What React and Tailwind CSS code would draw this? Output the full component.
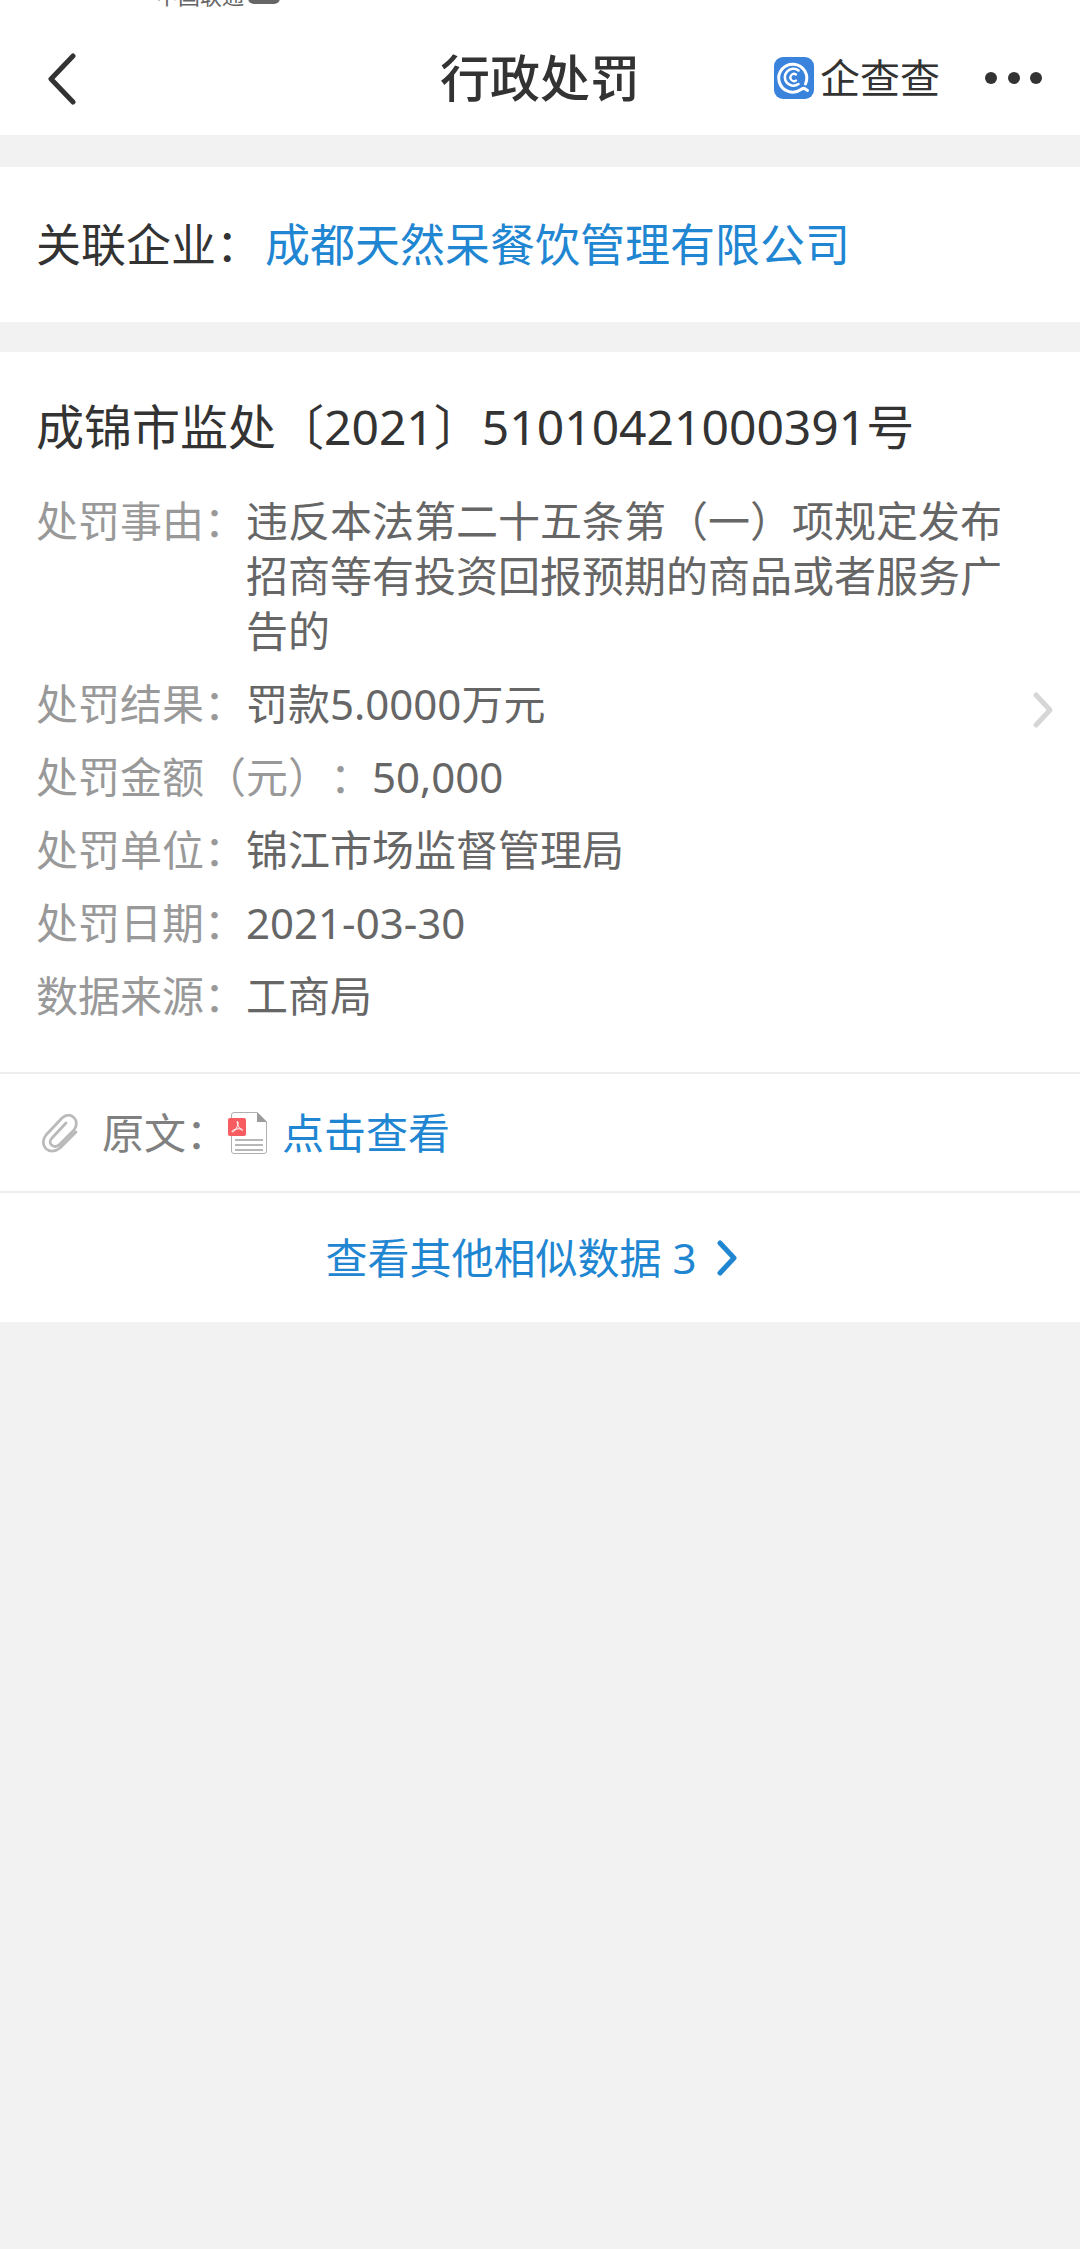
import React from 'react';

const records = [
  { label: '处罚事由：', value: '违反本法第二十五条第（一）项规定发布招商等有投资回报预期的商品或者服务广告的' },
  { label: '处罚结果：', value: '罚款5.0000万元' },
  { label: '处罚金额（元）：', value: '50,000' },
  { label: '处罚单位：', value: '锦江市场监督管理局' },
  { label: '处罚日期：', value: '2021-03-30' },
  { label: '数据来源：', value: '工商局' },
];

const ChevronLeft = () => (
  <svg width="32" height="54" viewBox="0 0 32 54" fill="none" stroke="#333333" strokeWidth="5" strokeLinecap="round" strokeLinejoin="round">
    <path d="M27 5 L5 28 L27 51" />
  </svg>
);

const ChevronRight = ({ color }) => (
  <svg width="22" height="38" viewBox="0 0 22 38" fill="none" stroke={color} strokeWidth="5" strokeLinecap="round" strokeLinejoin="round">
    <path d="M4 4 L18 19 L4 34" />
  </svg>
);

const BrandLogo = () => (
  <svg width="40" height="42" viewBox="0 0 40 42" fill="none" stroke="#ffffff" strokeLinecap="round">
    <rect width="40" height="42" rx="9" fill="#3a83dc" stroke="none" />
    <path d="M31.500 27 A14 14 0 1 0 27 32.500 C29 30.500 31 31 33.500 33.500" strokeWidth="3" />
    <path d="M24.500 13.500 A8.500 8.500 0 1 0 24.500 27" strokeWidth="2.6" />
    <path d="M22 17.500 A3.600 3.600 0 1 0 22 23.500" strokeWidth="2.2" />
  </svg>
);

const Paperclip = () => (
  <svg width="40" height="42" viewBox="0 0 40 42" fill="none" stroke="#bababa" strokeWidth="2.8" strokeLinecap="round" strokeLinejoin="round">
    <path d="M36 20 L20 36 C9 45 -2 33 6 23 L22 6 C31 -2 41 9 34 18 L19 33 C13 37 7 31 12 26 L26 11" />
  </svg>
);

const PdfFile = () => (
  <svg width="40" height="44" viewBox="0 0 40 44" fill="none">
    <path d="M6 1.5 H29 L38.5 11 V40 a2.5 2.5 0 0 1 -2.5 2.5 H6 a2.5 2.5 0 0 1 -2.5 -2.5 V4 A2.5 2.5 0 0 1 6 1.5 Z" fill="#ffffff" stroke="#b0b0b0" />
    <path d="M29 1 L39 11 H29 Z" fill="#9a9a9a" />
    <path d="M7 29 H35 M7 34 H35 M7 39 H35" stroke="#a0a0a0" strokeWidth="1.6" />
    <rect y="7" width="18" height="18" rx="2" fill="#f75c60" />
    <path d="M9 10.5 C11.5 10.5 9.5 15 8.5 17 C7 20 4.5 22 4 20.5 C3.5 18.5 14 16.5 14.5 18.8 C14.5 21 9.5 16 9 10.5 Z" stroke="#ffffff" strokeWidth="1" />
  </svg>
);

const App = () => {
  return (
    <div className="min-h-screen bg-[#f2f2f2] font-['Noto_Sans','Noto_Sans_CJK_SC',sans-serif] text-[#333333] [text-spacing-trim:space-all]">
      <header className="bg-white">
        {/* only the lower edge of the status bar stays visible */}
        <div className="flex h-5 items-start overflow-hidden pl-[156px] text-[22px] leading-[22px] text-[#666666]">
          <span className="-mt-4">中国联通</span>
          <span className="-mt-4 ml-1 rounded-md bg-[#666666] px-1 text-[16px] leading-[20px] font-bold text-white">HD</span>
        </div>
        <div className="grid h-[115px] grid-cols-[1fr_auto_1fr] items-center px-9">
          <button aria-label="返回" className="justify-self-start pl-2.5">
            <ChevronLeft />
          </button>
          <h1 className="text-[50px] leading-[60px] font-medium">行政处罚</h1>
          <div className="flex items-center justify-self-end">
            <BrandLogo />
            <span className="ml-1.5 text-[40px] leading-[48px]">企查查</span>
            <button aria-label="更多" className="ml-11">
              <svg width="60" height="14" viewBox="0 0 60 14" fill="#333333">
                <circle cx="7" cy="7" r="6" />
                <circle cx="30" cy="7" r="6" />
                <circle cx="52" cy="7" r="6" />
              </svg>
            </button>
          </div>
        </div>
      </header>

      <section className="mt-8 flex items-center gap-1 bg-white px-9 py-[50px] text-[45px] leading-[55px]">
        <span>关联企业：</span>
        <a href="#company" className="text-[#2186d2]">成都天然呆餐饮管理有限公司</a>
      </section>

      <main className="mt-[30px] bg-white">
        <div className="flex items-center justify-between pt-[45px] pr-[26px] pb-[49px] pl-9">
          <div className="min-w-0 flex-1">
            <h2 className="text-[48px] leading-[60px]">成锦市监处〔2021〕51010421000391号</h2>
            <dl className="mt-9 space-y-[18px] text-[42px] leading-[55px]">
              {records.map((item) => (
                <div key={item.label} className="flex">
                  <dt className="shrink-0 text-[#999999]">{item.label}</dt>
                  <dd className="text-[#666666]">{item.value}</dd>
                </div>
              ))}
            </dl>
          </div>
          <button aria-label="详情">
            <ChevronRight color="#d6d6d6" />
          </button>
        </div>

        <div className="flex items-center border-t-2 border-[#eeeeee] px-10 py-[31px] text-[42px] leading-[55px]">
          <Paperclip />
          <span className="ml-[22px] text-[#808080]">原文：</span>
          <PdfFile />
          <a href="#original" className="ml-3.5 text-[#2186d2]">点击查看</a>
        </div>

        <a href="#similar" className="flex items-center justify-center border-t-2 border-[#eeeeee] py-[37px] pr-4 text-[42px] leading-[55px] text-[#2186d2]">
          <span className="mr-5">查看其他相似数据 3</span>
          <ChevronRight color="#2186d2" />
        </a>
      </main>
    </div>
  );
};

export default App;
